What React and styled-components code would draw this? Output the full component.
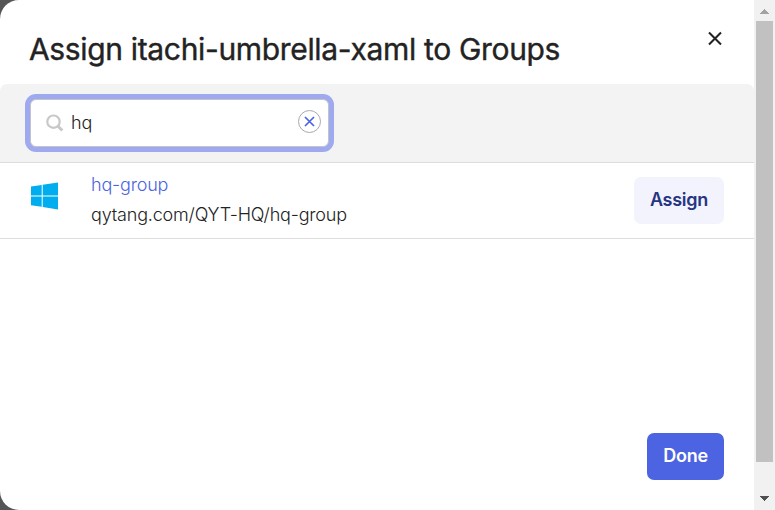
import React from "react";
import styled, { createGlobalStyle } from "styled-components";

const GlobalStyle = createGlobalStyle`
  * { box-sizing: border-box; }
  body {
    margin: 0;
    overflow: hidden;
    background: #555555;
    font-family: Inter, "Liberation Sans", sans-serif;
    color: #232323;
  }
`;

const Dialog = styled.div`
  display: flex;
  width: 775px;
  height: 510px;
  overflow: hidden;
  background: #ffffff;
  border-radius: 19px 0 0 19px;
`;

const Content = styled.main`
  display: flex;
  flex-direction: column;
  width: 754px;
`;

const Header = styled.header`
  display: flex;
  justify-content: space-between;
  height: 84px;
  padding: 29px 30px 0 29px;
`;

const Title = styled.h1`
  margin: 0;
  font-size: 30px;
  font-weight: 400;
  line-height: 40px;
  letter-spacing: -0.34px;
  white-space: nowrap;
  -webkit-text-stroke: 0.4px #232323;
`;

const IconButton = styled.button`
  display: flex;
  width: 18px;
  height: 18px;
  padding: 0;
  border: 0;
  background: transparent;
`;

const SearchBar = styled.section`
  height: 79px;
  padding: 15px 30px 0;
  background: #f3f3f3;
  border-bottom: 1px solid #dddddd;
  border-radius: 7px 7px 0 0;
`;

const SearchField = styled.div`
  display: flex;
  align-items: center;
  width: 299px;
  height: 48px;
  padding: 0 7px 0 15px;
  background: #ffffff;
  border: 1px solid #c4c4c8;
  border-radius: 6px;
  box-shadow: 0 0 0 5px #9fa9f0;
`;

const SearchInput = styled.input`
  flex: 1;
  min-width: 0;
  padding: 0 0 0 7px;
  border: 0;
  outline: 0;
  background: transparent;
  color: #232323;
  font: 350 18px/24px Inter, "Liberation Sans", sans-serif;
  letter-spacing: -0.2px;
`;

const ClearButton = styled.button`
  display: flex;
  align-items: center;
  justify-content: center;
  width: 23px;
  height: 23px;
  margin-top: -3px;
  padding: 0;
  background: #ffffff;
  border: 1px solid #a9a9ad;
  border-radius: 50%;
`;

const GroupRow = styled.section`
  display: flex;
  height: 76px;
  padding: 0 30px 0 31px;
  border-bottom: 1px solid #dddddd;
`;

const WindowsIcon = styled.svg`
  width: 27px;
  height: 28px;
  margin-top: 19px;
`;

const GroupText = styled.div`
  flex: 1;
  padding: 7px 0 0 33px;
  font-size: 18px;
  font-weight: 350;
  line-height: 30px;
  letter-spacing: -0.18px;
`;

const GroupName = styled.a`
  display: block;
  width: max-content;
  color: #4c64e1;
`;

const GroupPath = styled.div`
  width: max-content;
`;

const Button = styled.button`
  width: ${(p) => (p.$primary ? "77px" : "90px")};
  height: 47px;
  padding: 0 0 2px;
  border: 0;
  border-radius: 7px;
  background: ${(p) => (p.$primary ? "#4c64e1" : "#f2f3fd")};
  color: ${(p) => (p.$primary ? "#ffffff" : "#273482")};
  font: 600 18px/44px Inter, "Liberation Sans", sans-serif;
  letter-spacing: -0.25px;
`;

const AssignButton = styled(Button)`
  margin-top: 14px;
`;

const Footer = styled.footer`
  display: flex;
  justify-content: flex-end;
  margin-top: auto;
  padding: 0 30px 30px;
`;

const Scrollbar = styled.aside`
  display: flex;
  flex-direction: column;
  justify-content: space-between;
  width: 21px;
  background: #f1f1f1;
`;

const Track = styled.div`
  flex: 1;
`;

const Thumb = styled.div`
  width: 17px;
  height: 441px;
  margin-left: 2px;
  background: #c1c1c1;
`;

const Arrow = styled.svg`
  width: 21px;
  height: 21px;
`;

export default function App() {
  return (
    <>
      <GlobalStyle />
      <Dialog role="dialog">
        <Content>
          <Header>
            <Title>Assign itachi-umbrella-xaml to Groups</Title>
            <IconButton aria-label="Close">
              <svg width="18" height="18" viewBox="0 0 18 18">
                <path d="M3 3.5L15 15.5M15 3.5L3 15.5" stroke="#232323" strokeWidth="2.1" />
              </svg>
            </IconButton>
          </Header>
          <SearchBar>
            <SearchField>
              <svg width="18" height="18" viewBox="0 0 18 18" fill="none" stroke="#c8c8c8" strokeWidth="2.2">
                <circle cx="7.5" cy="7.7" r="6.2" />
                <path d="M12 12.2L16.3 16.5" strokeWidth="3" />
              </svg>
              <SearchInput defaultValue="hq" aria-label="Search" />
              <ClearButton aria-label="Clear">
                <svg width="11" height="11" viewBox="0 0 11 11">
                  <path d="M1 1L10 10M10 1L1 10" stroke="#4c64e1" strokeWidth="1.7" />
                </svg>
              </ClearButton>
            </SearchField>
          </SearchBar>
          <GroupRow>
            <WindowsIcon viewBox="0 0 27 28" fill="#00adef">
              <path d="M0 4.4L10.7 2.9V13.4H0ZM11.7 2.7L27 0.5V13.4H11.7ZM0 14.5H10.7V24.8L0 23.3ZM11.7 14.5H27V27.5L11.7 25.1Z" />
            </WindowsIcon>
            <GroupText>
              <GroupName>hq-group</GroupName>
              <GroupPath>qytang.com/QYT-HQ/hq-group</GroupPath>
            </GroupText>
            <AssignButton>Assign</AssignButton>
          </GroupRow>
          <Footer>
            <Button $primary>Done</Button>
          </Footer>
        </Content>
        <Scrollbar aria-hidden="true">
          <Arrow viewBox="0 0 21 21" shapeRendering="crispEdges">
            <path d="M5.5 14H15.5L10.5 9Z" fill="#a3a3a3" />
          </Arrow>
          <Track>
            <Thumb />
          </Track>
          <Arrow viewBox="0 0 21 21" shapeRendering="crispEdges">
            <path d="M5.5 7H15.5L10.5 12Z" fill="#505050" />
          </Arrow>
        </Scrollbar>
      </Dialog>
    </>
  );
}
